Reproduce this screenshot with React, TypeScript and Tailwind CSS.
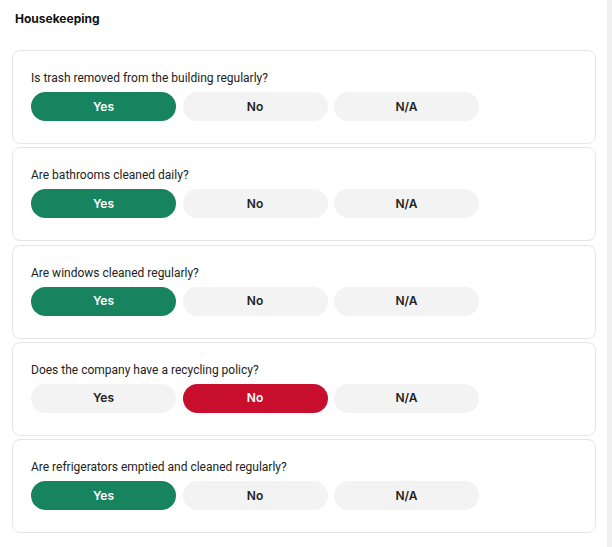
import React from "react";

type Ans = "Yes" | "No" | "N/A";

const items: { q: string; a: Ans }[] = [
  { q: "Is trash removed from the building regularly?", a: "Yes" },
  { q: "Are bathrooms cleaned daily?", a: "Yes" },
  { q: "Are windows cleaned regularly?", a: "Yes" },
  { q: "Does the company have a recycling policy?", a: "No" },
  { q: "Are refrigerators emptied and cleaned regularly?", a: "Yes" },
];

function Btn({ label, sel }: { label: Ans; sel: Ans }) {
  let cls = "bg-[#f3f3f3] text-[#222]";
  if (label === sel && label === "Yes") cls = "bg-[#17845f] text-white";
  if (label === sel && label === "No") cls = "bg-[#c8102e] text-white";
  return (
    <div
      className={`w-[145px] h-[29px] rounded-full flex items-center justify-center text-[12px] font-semibold ${cls}`}
    >
      {label}
    </div>
  );
}

export default function App() {
  return (
    <div
      className="relative w-[612px] h-[547px] bg-white overflow-hidden"
      style={{ fontFamily: "Inter, 'Noto Sans', sans-serif" }}
    >
      <div className="absolute top-0 right-0 w-[5px] h-full bg-[#f0f0f0]" />
      <div className="pl-[15px] pt-[11px] text-[12px] leading-[16px] font-bold text-[#111]">
        Housekeeping
      </div>
      <div className="mt-[23px] ml-[12px] w-[584px] flex flex-col gap-[3.25px]">
        {items.map((it) => (
          <div
            key={it.q}
            className="h-[94px] border border-[#e6e6e6] rounded-[8px] pl-[18px] pt-[19px] bg-white"
          >
            <div
              className="text-[12px] leading-[16px] text-[#222]"
              style={{ fontFamily: "Roboto, 'Liberation Sans', sans-serif" }}
            >
              {it.q}
            </div>
            <div className="mt-[6px] flex gap-[6.5px]">
              <Btn label="Yes" sel={it.a} />
              <Btn label="No" sel={it.a} />
              <Btn label="N/A" sel={it.a} />
            </div>
          </div>
        ))}
      </div>
    </div>
  );
}
